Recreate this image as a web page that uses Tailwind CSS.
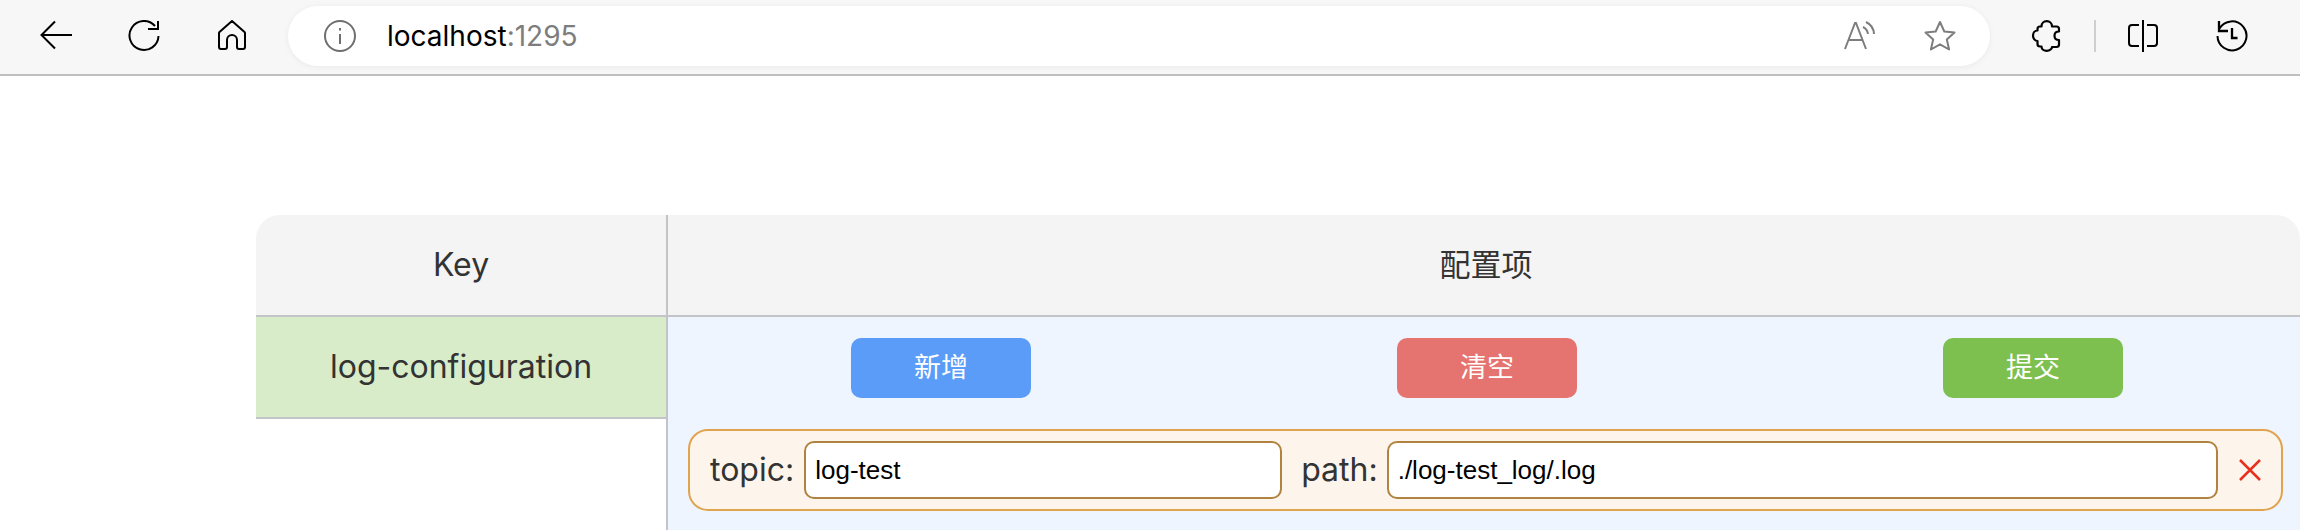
<!DOCTYPE html>
<html lang="zh-CN">
<head>
  <meta charset="UTF-8" />
  <title>localhost:1295</title>
  <script src="https://cdn.jsdelivr.net/npm/@tailwindcss/browser@4"></script>
</head>
<body class="bg-white h-[530px] overflow-hidden font-['Inter','Noto_Sans_CJK_SC',sans-serif]">
  <!-- browser toolbar -->
  <div class="h-[76px] bg-[#f7f7f7] border-b-2 border-[#bfbfbf] flex items-center pb-[2px]">
    <div class="flex items-center pl-[40px] w-[288px] gap-[56px] text-black">
      <svg class="w-8 h-8" viewBox="0 0 32 32" fill="none" stroke="currentColor" stroke-width="2"><path d="M32 15H2M15 1.500 1.500 15 15 28.500"/></svg>
      <svg class="w-8 h-8" viewBox="0 0 32 32" fill="none" stroke="currentColor" stroke-width="2"><path d="M27 6A14.500 14.500 0 1 0 30.500 16"/><path d="M30 1v8H20"/></svg>
      <svg class="w-8 h-8" viewBox="0 0 32 32" fill="none" stroke="currentColor" stroke-width="2" stroke-linejoin="round"><path d="M16 1 3.500 12a1.500 1.500 0 0 0-.5 1V27a2 2 0 0 0 2 2h4a2 2 0 0 0 2-2V20a5 5 0 0 1 10 0v7a2 2 0 0 0 2 2h4a2 2 0 0 0 2-2V13a1.500 1.500 0 0 0-.5-1Z"/></svg>
    </div>
    <div class="w-[1702px] h-[60px] bg-white rounded-[30px] shadow-[0_1px_6px_rgba(0,0,0,0.06)] flex items-center pl-[36px] pr-[34px]">
      <svg class="w-8 h-8 text-[#6f6f6f]" viewBox="0 0 32 32" fill="none" stroke="currentColor" stroke-width="2"><circle cx="16" cy="16" r="15"/><path d="M16 14v10M16 8v2.500"/></svg>
      <div class="ml-[31px] text-[28px] text-black">localhost<span class="text-[#7d7d7d]">:1295</span></div>
      <svg class="w-8 h-8 ml-auto text-[#7d7d7d]" viewBox="0 0 32 32" fill="none" stroke="currentColor" stroke-width="2"><path d="M1 29 11 3h1l10 26M5 20h14"/><path d="M19 7a9 9 0 0 1 5 7M22 2a14 14 0 0 1 8 12"/></svg>
      <svg class="w-8 h-8 ml-[48px] text-[#7d7d7d]" viewBox="0 0 32 32" fill="none" stroke="currentColor" stroke-width="2" stroke-linejoin="round"><path d="m16 2 4.300 9.500 10.200 1-7.700 6.900 2.300 10.100L16 24.300 6.900 29.500l2.300-10.100L1.500 12.500l10.200-1Z"/></svg>
    </div>
    <div class="flex items-center pl-[41px] text-black">
      <svg class="w-8 h-8" viewBox="0 0 32 32" fill="none" stroke="currentColor" stroke-width="2.200" stroke-linejoin="round"><path d="M10.500 6.500C10.500 3 13 1.200 15.700 1.200S21 3 21 6.500h4.500A2.500 2.500 0 0 1 28 9v2.500c-2.500 0-4.500 1.500-4.500 4.200S25.500 20 28 20v4.500a2.500 2.500 0 0 1-2.500 2.500H21c0 2-2.500 3.800-5.300 3.800S10.500 29 10.500 26.500H9A2.500 2.500 0 0 1 6.500 24v-3C4 21 2 18.500 2 15.700S4 10.500 6.500 10.500V9A2.500 2.500 0 0 1 9 6.500Z"/></svg>
      <div class="w-[2px] h-[32px] bg-[#cfcfcf] ml-[31px]"></div>
      <svg class="w-8 h-8 ml-[32px]" viewBox="0 0 32 32" fill="none" stroke="currentColor" stroke-width="2"><path d="M11 5H4a3 3 0 0 0-3 3v15a3 3 0 0 0 3 3h7M19 5h7a3 3 0 0 1 3 3v15a3 3 0 0 1-3 3h-7M15 0v32"/></svg>
      <svg class="w-8 h-8 ml-[56px]" viewBox="0 0 32 32" fill="none" stroke="currentColor" stroke-width="2"><path d="M3.500 8.500A14.500 14.500 0 1 1 1.500 16"/><path d="M3 1v10h9M16 8v10h5.500" stroke-width="2.300"/></svg>
    </div>
  </div>

  <!-- config table -->
  <div class="pt-[139px] pl-[256px]">
    <div class="flex h-[315px]">
      <div class="w-[410px] shrink-0 flex flex-col text-[#333] text-[32px]">
        <div class="h-[102px] bg-[#f4f4f4] rounded-tl-[24px] border-b-2 border-[#c2c4c8] flex items-center justify-center">Key</div>
        <div class="h-[102px] bg-[#d8ecc9] border-b-2 border-[#c2c4c8] flex items-center justify-center">log-configuration</div>
      </div>
      <div class="flex-1 flex flex-col border-l-2 border-[#c2c4c8]">
        <div class="h-[102px] shrink-0 bg-[#f4f4f4] rounded-tr-[24px] border-b-2 border-[#c2c4c8] flex items-center justify-center pl-[4px] text-[#333] text-[31px]">配置项</div>
        <div class="flex-1 bg-[#eef5ff] pl-[20px] pr-[17px]">
          <div class="flex pt-[21px] pl-[163px] gap-[366px]">
            <button class="w-[180px] h-[60px] rounded-[10px] bg-[#5a9cf8] text-white text-[27px]">新增</button>
            <button class="w-[180px] h-[60px] rounded-[10px] bg-[#e57370] text-white text-[27px]">清空</button>
            <button class="w-[180px] h-[60px] rounded-[10px] bg-[#7ec050] text-white text-[27px]">提交</button>
          </div>
          <div class="mt-[31px] h-[82px] flex items-center bg-[#fdf5ec] border-2 border-[#e0a44e] rounded-[20px] pl-[20px] text-[#333] text-[32px]">
            <span>topic:</span>
            <input class="ml-[10px] w-[478px] h-[58px] bg-white border-2 border-[#b08340] rounded-[10px] px-[9px] text-black text-[26px] font-['Liberation_Sans',sans-serif]" value="log-test" />
            <span class="ml-[19px]">path:</span>
            <input class="ml-[9px] w-[831px] h-[58px] bg-white border-2 border-[#b08340] rounded-[10px] px-[9px] text-black text-[26px] font-['Liberation_Sans',sans-serif]" value="./log-test_log/.log" />
            <svg class="w-[22px] h-[22px] ml-[21px] text-[#e8301f]" viewBox="0 0 22 22" fill="none" stroke="currentColor" stroke-width="2.500"><path d="m1 1 20 20M21 1 1 21"/></svg>
          </div>
        </div>
      </div>
    </div>
  </div>
</body>
</html>
